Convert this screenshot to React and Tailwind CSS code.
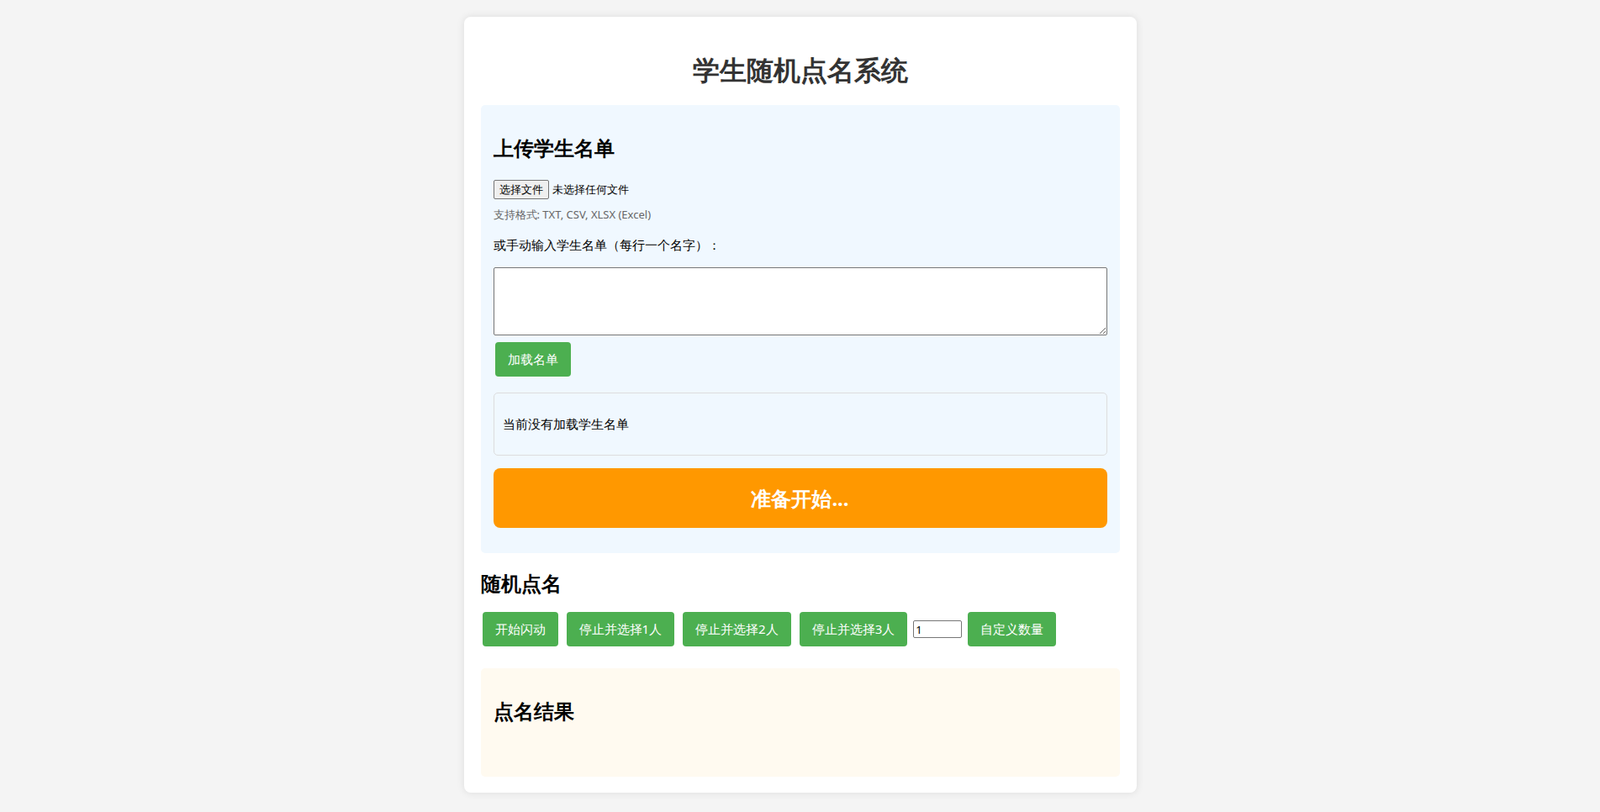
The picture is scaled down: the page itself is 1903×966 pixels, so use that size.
export default function App() {
  const btn = "bg-[#4caf50] text-white text-[15px] h-[41px] px-[15px] rounded-[4px] leading-none";
  return (
    <div className="min-h-[966px] bg-[#f4f4f4] pt-[20px] pb-[21px] font-['Liberation_Sans','Noto_Sans_CJK_SC',sans-serif] text-black">
      <div className="mx-auto w-[800px] bg-white rounded-[8px] shadow-[0_0_10px_rgba(0,0,0,0.1)] px-[20px] pt-[20px] pb-[19px]">
        <h1 className="text-[32px] font-bold text-[#333] text-center leading-[42px] mt-[22px] mb-[21px]">学生随机点名系统</h1>
        <div className="bg-[#f0f8ff] rounded-[5px] px-[15px] pt-[35px] pb-[30px]">
          <h2 className="text-[24px] font-bold leading-[32px]">上传学生名单</h2>
          <div className="mt-[22px] flex items-center text-[13px]">
            <span className="border border-[#767676] bg-[#efefef] rounded-[2px] px-[6px] h-[23px] flex items-center">选择文件</span>
            <span className="ml-[4px]">未选择任何文件</span>
          </div>
          <div className="mt-[9px] text-[13px] text-[#666] leading-[18px]">支持格式: TXT, CSV, XLSX (Excel)</div>
          <div className="mt-[17px] text-[15px] leading-[20px]">或手动输入学生名单（每行一个名字）：</div>
          <textarea className="mt-[17px] block w-full h-[81px] border border-[#767676] rounded-[2px] bg-white"></textarea>
          <button className={btn + " mt-[8px] ml-[2px]"}>加载名单</button>
          <div className="mt-[19px] h-[75px] border border-[#ddd] rounded-[5px] px-[10px] flex items-center text-[15px] w-[730px]">当前没有加载学生名单</div>
          <div className="mt-[15px] h-[71px] bg-[#ff9800] rounded-[8px] flex items-center justify-center text-white text-[24px] font-bold w-[730px]">准备开始...</div>
        </div>
        <h2 className="text-[24px] font-bold leading-[32px] mt-[20px]">随机点名</h2>
        <div className="mt-[18px] flex items-center gap-[10px] pl-[2px]">
          <button className={btn}>开始闪动</button>
          <button className={btn}>停止并选择1人</button>
          <button className={btn}>停止并选择2人</button>
          <button className={btn}>停止并选择3人</button>
          <input type="number" defaultValue="1" className="w-[58px] h-[21px] border border-[#767676] rounded-[2px] text-[13px] px-[2px] -mx-[3px]" />
          <button className={btn}>自定义数量</button>
        </div>
        <div className="mt-[26px] bg-[#fffaf0] rounded-[5px] px-[15px] pt-[35px] h-[129px]">
          <h2 className="text-[24px] font-bold leading-[32px]">点名结果</h2>
        </div>
      </div>
    </div>
  );
}
